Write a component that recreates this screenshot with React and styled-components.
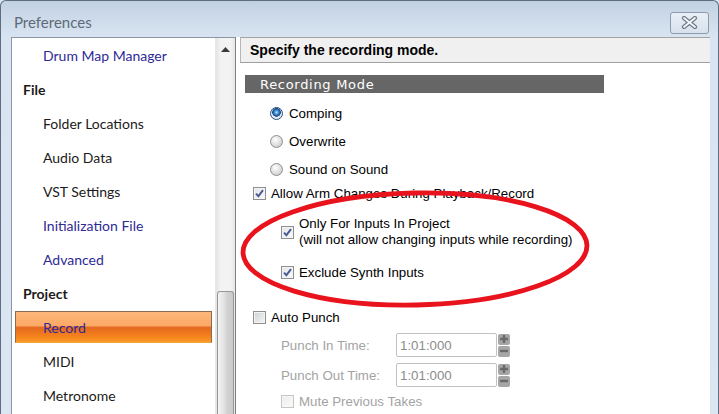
import React from 'react';
import styled, { createGlobalStyle } from 'styled-components';

const GlobalStyle = createGlobalStyle`
  html, body {
    margin: 0;
    padding: 0;
    background: #dbe6f3;
  }
  * { box-sizing: border-box; }
`;

const Window = styled.div`
  width: 719px;
  height: 414px;
  display: flex;
  flex-direction: column;
  overflow: hidden;
  border: 1px solid #5e6d80;
  border-bottom: none;
  border-top-left-radius: 6px;
  border-top-right-radius: 6px;
  background: linear-gradient(#c2d1e2 0, #d8e4f1 36px, #dbe6f3 100%);
`;

const TitleBar = styled.div`
  height: 36px;
  flex: none;
  display: flex;
  align-items: center;
  justify-content: space-between;
  padding: 6px 9px 0 13px;
`;

const Title = styled.div`
  font-family: Lato, 'Noto Sans', sans-serif;
  font-size: 15px;
  color: #5f6a78;
`;

const CloseButton = styled.div`
  width: 39px;
  height: 22px;
  margin-top: 1px;
  border: 1px solid #8d9aab;
  border-radius: 3px;
  background: linear-gradient(#e9eff6, #d8e2ec);
  display: flex;
  align-items: center;
  justify-content: center;
`;

const Body = styled.div`
  flex: 1;
  min-height: 0;
  display: flex;
  padding: 0 8px 0 10px;
`;

const Sidebar = styled.div`
  width: 225px;
  flex: none;
  display: flex;
  background: #fff;
  border: 1px solid #8b97a6;
  border-right-color: #7f7f7f;
  border-bottom: none;
`;

const NavList = styled.div`
  flex: 1;
  display: flex;
  flex-direction: column;
`;

const NavItem = styled.div`
  height: 34px;
  flex: none;
  display: flex;
  align-items: center;
  padding-left: ${p => (p.$heading ? 11 : 31)}px;
  font-family: Lato, 'Noto Sans', sans-serif;
  font-size: 14px;
  font-weight: ${p => (p.$heading ? 700 : 400)};
  color: ${p => (p.$link ? '#2e2a96' : '#1c1a1a')};
`;

const SelectedItem = styled(NavItem)`
  height: 32px;
  margin: 1px 3px 1px 3px;
  padding-left: 27px;
  color: #2e2a96;
  border: 1px solid #8a6d4e;
  border-bottom-color: #f3a637;
  background: linear-gradient(
    #fdb87b 0%,
    #fba866 45%,
    #e4691f 52%,
    #f7861c 85%,
    #fb9a2c 100%
  );
`;

const Scrollbar = styled.div`
  width: 20px;
  flex: none;
  display: flex;
  flex-direction: column;
  border-left: 1px solid #e6e6e6;
  background: linear-gradient(90deg, #e4e4e4, #f3f3f3 25%, #f3f3f3 75%, #e7e7e7);
`;

const ArrowButton = styled.div`
  height: 22px;
  flex: none;
  display: flex;
  align-items: center;
  justify-content: center;
`;

const Track = styled.div`
  flex: 1;
  display: flex;
  flex-direction: column;
  padding-top: 231px;
`;

const Thumb = styled.div`
  flex: 1;
  margin: 0 1px;
  border: 1px solid #979797;
  border-bottom: none;
  border-radius: 3px 3px 0 0;
  background: linear-gradient(90deg, #f4f4f4, #e2e2e2 40%, #d2d2d2 60%, #cbcbcb);
`;

const Content = styled.div`
  flex: 1;
  position: relative;
  background: #fff;
  display: flex;
  flex-direction: column;
`;

const Header = styled.div`
  height: 26px;
  flex: none;
  margin-left: 4px;
  display: flex;
  align-items: center;
  padding-left: 9px;
  background: #f0f0f0;
  border-top: 1px solid #a3a3a3;
  border-left: 1px solid #b5b5b5;
  border-bottom: 1px solid #a0a0a0;
  font-family: 'Liberation Sans', Arial, sans-serif;
  font-weight: 700;
  font-size: 14px;
  color: #000;
`;

const SectionBar = styled.div`
  width: 359px;
  height: 18px;
  flex: none;
  margin: 12px 0 6px 9px;
  padding-left: 15px;
  display: flex;
  align-items: center;
  background: #666;
  color: #fff;
  font-family: 'DejaVu Sans', Verdana, sans-serif;
  font-size: 13px;
  letter-spacing: 0.7px;
`;

const Row = styled.div`
  height: ${p => p.$h}px;
  flex: none;
  margin-top: ${p => p.$mt || 0}px;
  padding-left: ${p => p.$indent}px;
  display: flex;
  align-items: center;
  gap: ${p => p.$gap ?? 5}px;
  font-family: 'Liberation Sans', Arial, sans-serif;
  font-size: 13.3px;
  color: ${p => (p.$disabled ? '#a3a3a3' : '#000')};
`;

const TwoLines = styled.div`
  line-height: 16px;
`;

const Box = styled.span`
  width: 13px;
  height: 13px;
  flex: none;
  display: flex;
  align-items: center;
  justify-content: center;
  border: 1px solid ${p => (p.$disabled ? '#c6c6c6' : '#8e8f8f')};
  background: ${p =>
    p.$disabled
      ? 'linear-gradient(135deg, #ececec, #fbfbfb)'
      : p.$checked
      ? 'linear-gradient(135deg, #e2e4e8, #fafafa)'
      : 'linear-gradient(135deg, #cdd0d4, #f6f6f6)'};
  box-shadow: inset 0 0 0 1px ${p => (p.$disabled ? '#f6f6f6' : '#f4f4f4')};
`;

const Radio = styled.span`
  width: 13px;
  height: 13px;
  flex: none;
  border-radius: 50%;
  border: 1px solid ${p => (p.$checked ? '#2c4e7a' : '#8e8f8f')};
  background: ${p =>
    p.$checked
      ? 'radial-gradient(circle at 50% 40%, #b4e8ff 0, #3f8fd8 2px, #134782 4px, #dfe8f2 4.6px, #f2f2f2 100%)'
      : 'radial-gradient(circle at 40% 35%, #ffffff 0, #e6e6e6 40%, #c2c2c2 100%)'};
`;

const Label = styled.span`
  width: ${p => p.$w}px;
  min-width: 0;
  flex: none;
  overflow: hidden;
  white-space: nowrap;
`;

const Field = styled.div`
  width: 101px;
  height: 24px;
  flex: none;
  display: flex;
  align-items: center;
  padding-left: 3px;
  border: 1px solid #c2c2c2;
  border-radius: 2px;
  background: #fff;
  color: #8c8c8c;
`;

const Spinner = styled.div`
  display: flex;
  flex-direction: column;
  gap: 1px;
  margin-left: 1px;
`;

const SpinButton = styled.span`
  width: 12px;
  height: 11px;
  display: flex;
  align-items: center;
  justify-content: center;
  border-radius: 2px;
  background: #a6a6a6;
`;

const Overlay = styled.svg`
  position: absolute;
  left: 0;
  top: 0;
  width: 100%;
  height: 100%;
  pointer-events: none;
`;

const Check = ({ color = '#4a5b93' }) => (
  <svg width="9" height="9" viewBox="0 0 9 9">
    <path d="M1 4.6 L3.4 7.2 L8 1.2" fill="none" stroke={color} strokeWidth="1.9" />
  </svg>
);

const Checkbox = ({ checked, disabled }) => (
  <Box $checked={checked} $disabled={disabled}>
    {checked && <Check />}
  </Box>
);

const Plus = () => (
  <svg width="8" height="8" viewBox="0 0 8 8">
    <path d="M0 4 H8 M4 0 V8" stroke="#6a6a6a" strokeWidth="2.4" />
  </svg>
);

const Minus = () => (
  <svg width="8" height="8" viewBox="0 0 8 8">
    <path d="M0 4 H8" stroke="#6a6a6a" strokeWidth="2.4" />
  </svg>
);

const TimeField = ({ label, value }) => (
  <Row $h={24} $indent={45} $gap={0} $disabled>
    <Label $w={115}>{label}</Label>
    <Field>{value}</Field>
    <Spinner>
      <SpinButton><Plus /></SpinButton>
      <SpinButton><Minus /></SpinButton>
    </Spinner>
  </Row>
);

const navItems = [
  { text: 'Drum Map Manager', link: true },
  { text: 'File', heading: true },
  { text: 'Folder Locations' },
  { text: 'Audio Data' },
  { text: 'VST Settings' },
  { text: 'Initialization File', link: true },
  { text: 'Advanced', link: true },
  { text: 'Project', heading: true },
  { text: 'Record', selected: true },
  { text: 'MIDI' },
  { text: 'Metronome' },
];

const modes = [
  { text: 'Comping', checked: true },
  { text: 'Overwrite' },
  { text: 'Sound on Sound' },
];

function App() {
  return (
    <>
      <GlobalStyle />
      <Window>
        <TitleBar>
          <Title>Preferences</Title>
          <CloseButton>
            <svg width="17" height="13" viewBox="0 0 17 13">
              <path d="M3 2 L14 11 M14 2 L3 11" stroke="#6f7b8a" strokeWidth="4.2" strokeLinecap="round" />
              <path d="M3 2 L14 11 M14 2 L3 11" stroke="#f5f7fa" strokeWidth="1.8" strokeLinecap="round" />
            </svg>
          </CloseButton>
        </TitleBar>
        <Body>
          <Sidebar>
            <NavList>
              {navItems.map((item, idx) =>
                item.selected ? (
                  <SelectedItem key={idx}>{item.text}</SelectedItem>
                ) : (
                  <NavItem key={idx} $heading={item.heading} $link={item.link}>
                    {item.text}
                  </NavItem>
                )
              )}
            </NavList>
            <Scrollbar>
              <ArrowButton>
                <svg width="9" height="5" viewBox="0 0 9 5">
                  <path d="M0 5 L4.5 0 L9 5 Z" fill="#3a3a3a" />
                </svg>
              </ArrowButton>
              <Track>
                <Thumb />
              </Track>
            </Scrollbar>
          </Sidebar>
          <Content>
            <Header>Specify the recording mode.</Header>
            <SectionBar>Recording Mode</SectionBar>
            {modes.map((m, idx) => (
              <Row key={idx} $h={28} $indent={34} $gap={6}>
                <Radio $checked={m.checked} />
                {m.text}
              </Row>
            ))}
            <Row $h={20} $indent={17}>
              <Checkbox checked />
              Allow Arm Changes During Playback/Record
            </Row>
            <Row $h={36} $mt={11} $indent={45}>
              <Checkbox checked />
              <TwoLines>
                Only For Inputs In Project
                <br />
                (will not allow changing inputs while recording)
              </TwoLines>
            </Row>
            <Row $h={20} $mt={12} $indent={45}>
              <Checkbox checked />
              Exclude Synth Inputs
            </Row>
            <Row $h={20} $mt={25} $indent={17}>
              <Checkbox />
              Auto Punch
            </Row>
            <Row $h={6} $indent={0} />
            <TimeField label="Punch In Time:" value="1:01:000" />
            <Row $h={6} $indent={0} />
            <TimeField label="Punch Out Time:" value="1:01:000" />
            <Row $h={20} $mt={4} $indent={45} $disabled>
              <Checkbox disabled />
              Mute Previous Takes
            </Row>
            <Overlay>
              <ellipse
                cx="179"
                cy="212"
                rx="172"
                ry="56"
                fill="none"
                stroke="#e8131c"
                strokeWidth="4.8"
                transform="rotate(-1.2 179 212)"
              />
            </Overlay>
          </Content>
        </Body>
      </Window>
    </>
  );
}

export default App;
